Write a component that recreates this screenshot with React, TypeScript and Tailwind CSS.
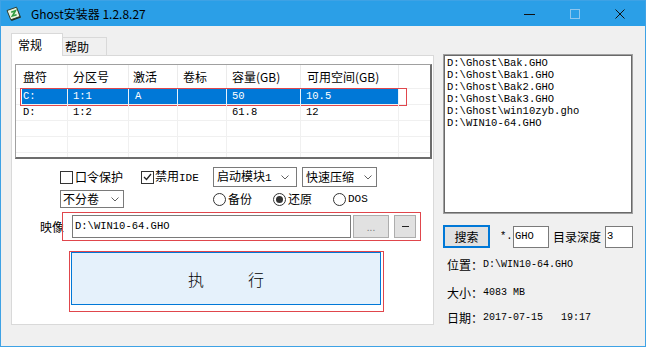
import React from "react";

const MONO = "font-['Liberation_Mono','Noto_Sans_CJK_SC',monospace]";
const RED = "border-[#e0464c]";

const COLS = [
  { w: "w-[52px]", pl: "pl-[7px]", head: "盘符" },
  { w: "w-[61px]", pl: "pl-[5px]", head: "分区号" },
  { w: "w-[49px]", pl: "pl-[4px]", head: "激活" },
  { w: "w-[49px]", pl: "pl-[5px]", head: "卷标" },
  { w: "w-[74px]", pl: "pl-[5px]", head: "容量(GB)" },
  { w: "w-[98px]", pl: "pl-[6px]", head: "可用空间(GB)" },
];

const FILES = [
  "D:\\Ghost\\Bak.GHO",
  "D:\\Ghost\\Bak1.GHO",
  "D:\\Ghost\\Bak2.GHO",
  "D:\\Ghost\\Bak3.GHO",
  "D:\\Ghost\\win10zyb.gho",
  "D:\\WIN10-64.GHO",
];

function Chevron() {
  return (
    <svg width="8" height="5" viewBox="0 0 8 5" className="shrink-0">
      <path d="M0.5 0.5 L4 4 L7.5 0.5" fill="none" stroke="#606060" strokeWidth="1" />
    </svg>
  );
}

function Check({ checked }: { checked?: boolean }) {
  return (
    <span className="flex h-[13px] w-[13px] shrink-0 items-center justify-center border border-[#333333] bg-white">
      {checked && (
        <svg width="9" height="8" viewBox="0 0 9 8">
          <path d="M1 4 L3.5 6.5 L8 1" fill="none" stroke="#222222" strokeWidth="1.3" />
        </svg>
      )}
    </span>
  );
}

function Radio({ checked }: { checked?: boolean }) {
  return (
    <span className="flex h-[13px] w-[13px] shrink-0 items-center justify-center rounded-full border border-[#333333] bg-white">
      {checked && <span className="h-[7px] w-[7px] rounded-full bg-[#333333]" />}
    </span>
  );
}

function Row({ cells, selected }: { cells: string[]; selected?: boolean }) {
  return (
    <div className={`relative flex h-[16px] border-b border-[#f0f0f0] ${MONO} text-[10.5px] leading-none`}>
      {COLS.map((c, i) =>
        selected && i === 0 ? (
          <div key={i} className={`${c.w} shrink-0 border-r border-[#f0f0f0] pl-[6px]`}>
            <div className="flex h-full items-center bg-[#0078d7] pl-[1px] text-white">{cells[i]}</div>
          </div>
        ) : (
          <div
            key={i}
            className={`${c.w} ${i === 0 ? "pl-[7px]" : i === 2 ? "pl-[6px]" : "pl-[5px]"} flex shrink-0 items-center border-r ${
              selected ? "border-[#e8f2fb] bg-[#0078d7] text-white" : "border-[#f0f0f0]"
            }`}
          >
            {cells[i]}
          </div>
        )
      )}
      <div className="flex-1" />
      {selected && <div className={`pointer-events-none absolute left-[4px] top-[-1px] h-[18px] w-[387px] border ${RED}`} />}
    </div>
  );
}

export default function App() {
  return (
    <div className="flex h-[347px] w-[646px] flex-col overflow-hidden border border-[#3ea2e5] bg-[#f0f0f0] font-['Noto_Sans_CJK_SC',sans-serif] text-[12px] leading-none text-black">
      {/* title bar */}
      <div className="flex h-[25px] shrink-0 items-center bg-[#2b9fe7]">
        <div className="ml-[5px] h-[16px] w-[16px]">
          <svg width="16" height="16" viewBox="0 0 16 16">
            <polygon points="1.5,5.5 11,2 15,11.5 5.5,15" fill="#1d2a1d" />
            <polygon points="1,4.5 10.5,1.2 14,10.5 4.8,13.8" fill="#eaf4de" stroke="#2f3f2f" strokeWidth="1" />
            <path d="M5.2 6.2 L9.4 4.8 L6.4 10 L10.6 8.8" fill="none" stroke="#2e9a3e" strokeWidth="1.6" />
          </svg>
        </div>
        <span className="ml-[9px]">Ghost安装器 1.2.8.27</span>
        <div className="ml-auto mr-[3px] flex h-full">
          <div className="flex w-[45px] items-center justify-center">
            <span className="mt-[1px] h-px w-[11px] bg-[#111111]" />
          </div>
          <div className="flex w-[45px] items-center justify-center">
            <span className="h-[10px] w-[10px] border border-[#8ec6ee]" />
          </div>
          <div className="flex w-[45px] items-center justify-center">
            <svg width="10" height="10" viewBox="0 0 10 10">
              <path d="M0.5 0.5 L9.5 9.5 M9.5 0.5 L0.5 9.5" stroke="#111111" strokeWidth="1" />
            </svg>
          </div>
        </div>
      </div>

      <div className="flex flex-1">
        {/* left: tabs */}
        <div className="ml-[10px] flex flex-col pt-[7px]">
          <div className="relative z-10 -mb-px flex h-[23px] items-end">
            <div className="h-[23px] w-[52px] border-x border-t border-[#d9d9d9] bg-white pl-[6px] pt-[5px]">常规</div>
            <div className="mb-px h-[18px] w-[44px] border-r border-t border-[#d9d9d9] bg-[#f0f0f0] pl-[2px] pt-[3px]">帮助</div>
          </div>
          <div className="flex h-[270px] w-[423px] flex-col border border-[#d9d9d9] bg-white">
            {/* list view */}
            <div className="ml-[3px] mt-[8px] flex h-[95px] w-[417px] flex-col border-l border-t border-[#a0a0a0] border-b-2 border-r-2 border-b-[#6d6d6d] border-r-[#6d6d6d]">
              <div className="flex h-[24px] border-b border-[#f0f0f0]">
                {COLS.map((c) => (
                  <div key={c.head} className={`${c.w} ${c.pl} flex shrink-0 items-center border-r border-[#ebebeb]`}>
                    {c.head}
                  </div>
                ))}
                <div className="flex-1" />
              </div>
              <Row selected cells={["C:", "1:1", "A", "", "50", "10.5"]} />
              <Row cells={["D:", "1:2", "", "", "61.8", "12"]} />
              <Row cells={["", "", "", "", "", ""]} />
              <Row cells={["", "", "", "", "", ""]} />
              <div className="flex flex-1">
                {COLS.map((c) => (
                  <div key={c.head} className={`${c.w} shrink-0 border-r border-[#f0f0f0]`} />
                ))}
              </div>
            </div>

            {/* options row */}
            <div className="mt-[8px] flex h-[20px] items-center pl-[48px]">
              <div className="flex w-[81px] items-center gap-[2px]">
                <Check />
                <span>口令保护</span>
              </div>
              <div className="flex w-[72px] items-center gap-[1px]">
                <Check checked />
                <span>
                  禁用<span className={`${MONO} text-[11px]`}>IDE</span>
                </span>
              </div>
              <div className="flex h-[20px] w-[84px] items-center justify-between border border-[#7a7a7a] bg-white pl-[3px] pr-[7px]">
                <span>
                  启动模块<span className={`${MONO} text-[11px]`}>1</span>
                </span>
                <Chevron />
              </div>
              <div className="ml-[5px] flex h-[20px] w-[75px] items-center justify-between border border-[#7a7a7a] bg-white pl-[3px] pr-[4px]">
                <span>快速压缩</span>
                <Chevron />
              </div>
            </div>

            <div className="mt-[3px] flex h-[18px] items-center pl-[48px]">
              <div className="flex h-[18px] w-[64px] items-center justify-between border border-[#7a7a7a] bg-white pl-[2px] pr-[4px]">
                <span>不分卷</span>
                <Chevron />
              </div>
              <div className="ml-[89px] flex w-[60px] items-center gap-[2px]">
                <Radio />
                <span>备份</span>
              </div>
              <div className="flex w-[60px] items-center gap-[2px]">
                <Radio checked />
                <span>还原</span>
              </div>
              <div className="flex w-[60px] items-center gap-[2px]">
                <Radio />
                <span className={`${MONO} text-[11px]`}>DOS</span>
              </div>
            </div>

            {/* image path */}
            <div className="mt-[4px] flex h-[29px] items-center pl-[28px]">
              <span className="w-[22px] shrink-0 whitespace-nowrap">映像</span>
              <div className={`flex h-[29px] w-[359px] items-center border ${RED} pl-[9px]`}>
                <div className={`flex h-[23px] w-[279px] items-center border border-[#7a7a7a] bg-white pl-[2px] ${MONO} text-[10.5px]`}>
                  D:\WIN10-64.GHO
                </div>
                <div className="ml-[2px] flex h-[23px] w-[36px] items-center justify-center border border-[#adadad] bg-[#e1e1e1] text-[10px] text-[#808080]">
                  ...
                </div>
                <div className="ml-[5px] flex h-[23px] w-[22px] items-center justify-center border border-[#adadad] bg-[#e1e1e1]">
                  <span className="h-px w-[7px] bg-[#222222]" />
                </div>
              </div>
            </div>

            {/* execute */}
            <div className="mt-[10px] pl-[57px]">
              <div className={`h-[61px] w-[315px] border ${RED} pl-px`}>
                <div className="flex h-[53px] w-[310px] items-center justify-center gap-[44px] border border-[#0078d7] bg-[#e5f1fb] text-[16px] font-light">
                  <span>执</span>
                  <span>行</span>
                </div>
              </div>
            </div>
          </div>
        </div>

        {/* right column */}
        <div className="ml-[9px] flex w-[190px] flex-col pt-[28px]">
          <div className="h-[160px] border border-[#a0a0a0]">
            <div className={`h-full border border-[#696969] bg-white pl-[2px] pt-px ${MONO} text-[10.5px] leading-[12px]`}>
              {FILES.map((f) => (
                <div key={f}>{f}</div>
              ))}
            </div>
          </div>

          <div className="mt-[11px] flex h-[23px] items-center">
            <div className="flex h-[23px] w-[47px] items-center justify-center border-2 border-[#0078d7] bg-[#e1e1e1]">搜索</div>
            <span className={`ml-[10px] w-[13px] ${MONO} text-[10.5px]`}>*.</span>
            <div className={`flex h-[22px] w-[36px] items-center border border-[#7a7a7a] bg-white pl-px ${MONO} text-[10.5px]`}>GHO</div>
            <span className="ml-[4px]">目录深度</span>
            <div className={`ml-[4px] flex h-[22px] w-[28px] items-center border border-[#7a7a7a] bg-white pl-px ${MONO} text-[10.5px]`}>3</div>
          </div>

          <div className="mt-[7px] flex h-[20px] items-center pl-[4px]">
            <span>位置：</span>
            <span className={`${MONO} text-[10px]`}>D:\WIN10-64.GHO</span>
          </div>
          <div className="mt-[8px] flex h-[20px] items-center pl-[4px]">
            <span>大小：</span>
            <span className={`${MONO} text-[10px]`}>4083 MB</span>
          </div>
          <div className="mt-[5px] flex h-[20px] items-center pl-[4px]">
            <span>日期：</span>
            <span className={`${MONO} whitespace-pre text-[10px]`}>2017-07-15   19:17</span>
          </div>
        </div>
      </div>
    </div>
  );
}
